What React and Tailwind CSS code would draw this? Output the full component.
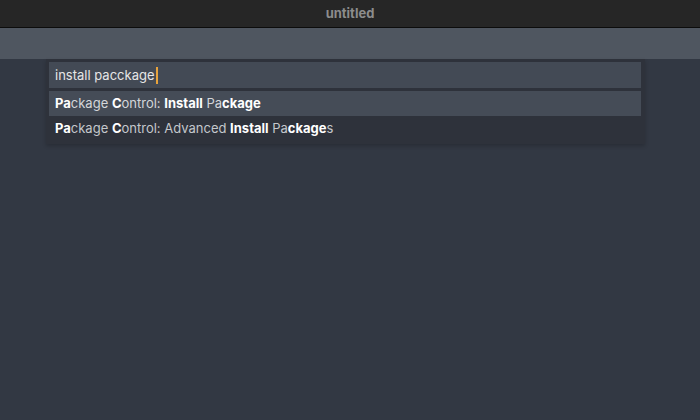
export default function App() {
  return (
    <div className="w-[700px] h-[420px] bg-[#323843] flex flex-col font-['Inter',sans-serif] overflow-hidden">
      <div className="h-[28px] bg-[#262626] border-b border-[#0c0c0c] flex items-center justify-center shrink-0">
        <span className="text-[13px] font-bold text-[#8c8c8c]">untitled</span>
      </div>
      <div className="h-[31px] bg-[#4f5660] shrink-0" />
      <div className="ml-[46px] w-[599px] bg-[#2e323b] pl-[3px] pr-[4px] pt-[3px] pb-[3px] shadow-[0_2px_4px_rgba(0,0,0,0.2)]">
        <div className="h-[26px] bg-[#434a55] flex items-center px-[6px] text-[13px] text-[#e6e6e6]">
          <span className="pt-[1px]">install pacckage</span>
          <span className="ml-[1px] w-[2px] h-[17px] bg-[#e8a33c]" />
        </div>
        <div className="mt-[3px] h-[25px] bg-[#454c57] flex items-center px-[6px] text-[13px] text-[#d4d6da]">
          <span className="pt-[1px]"><b className="text-white">Pa</b>ckage <b className="text-white">C</b>ontrol: <b className="text-white">Install</b> Pa<b className="text-white">ckage</b></span>
        </div>
        <div className="h-[25px] flex items-center px-[6px] text-[13px] text-[#c4c7cc]">
          <span className="pt-[1px]"><b className="text-white">Pa</b>ckage <b className="text-white">C</b>ontrol: Advanced <b className="text-white">Install</b> Pa<b className="text-white">ckage</b>s</span>
        </div>
      </div>
    </div>
  );
}
